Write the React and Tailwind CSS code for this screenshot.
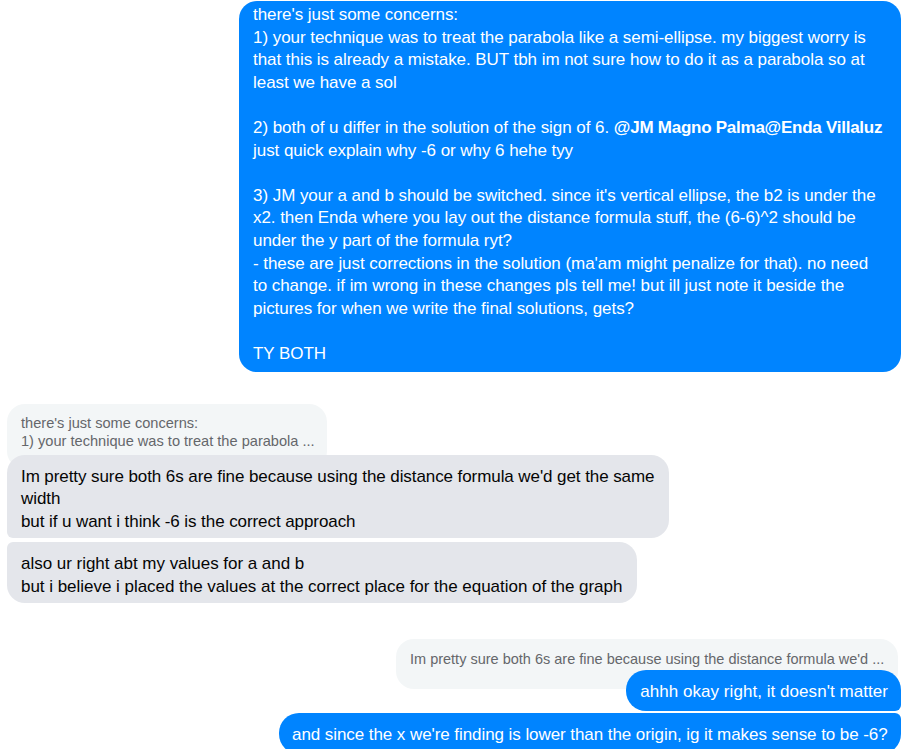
import React from "react";

const topLines = [
  "there's just some concerns:",
  "1) your technique was to treat the parabola like a semi-ellipse. my biggest worry is",
  "that this is already a mistake. BUT tbh im not sure how to do it as a parabola so at",
  "least we have a sol",
  "",
  "MENTION",
  "just quick explain why -6 or why 6 hehe tyy",
  "",
  "3) JM your a and b should be switched. since it's vertical ellipse, the b2 is under the",
  "x2. then Enda where you lay out the distance formula stuff, the (6-6)^2 should be",
  "under the y part of the formula ryt?",
  "- these are just corrections in the solution (ma'am might penalize for that). no need",
  "to change. if im wrong in these changes pls tell me! but ill just note it beside the",
  "pictures for when we write the final solutions, gets?",
  "",
  "TY BOTH",
];

function Line({ text }) {
  if (text === "") return <div className="h-[22.6px]">&nbsp;</div>;
  if (text === "MENTION")
    return (
      <div className="h-[22.6px] whitespace-nowrap">
        2) both of u differ in the solution of the sign of 6.{" "}
        <span className="font-bold tracking-[-0.25px]">@JM Magno Palma@Enda Villaluz</span>
      </div>
    );
  return <div className="h-[22.6px] whitespace-nowrap">{text}</div>;
}

export default function App() {
  return (
    <div className="h-[749px] w-[908px] overflow-hidden bg-white font-['Liberation_Sans',Arial,sans-serif] text-[17px] leading-[22.6px]">
      <div className="flex flex-col">
        {/* Top sent message */}
        <div className="ml-[239px] mt-[1px] w-[662px] rounded-[18px] bg-[#0084ff] pl-[14px] pr-[12px] pt-[3px] pb-[6px] tracking-[-0.05px] text-white">
          {topLines.map((t, i) => (
            <Line key={i} text={t} />
          ))}
        </div>

        {/* Reply quote 1 */}
        <div className="ml-[7px] mt-[32px] w-[320px] rounded-[18px] bg-[#f3f6f7] pl-[14px] pt-[10px] pb-[19px] text-[14.6px] leading-[18px] text-[#65676b]">
          <div className="whitespace-nowrap">there's just some concerns:</div>
          <div className="whitespace-nowrap">1) your technique was to treat the parabola ...</div>
        </div>

        {/* Received bubble A */}
        <div className="relative z-10 ml-[7px] -mt-[14px] w-[662px] rounded-[18px] rounded-bl-[6px] bg-[#e4e6eb] pl-[14px] pt-[11px] pb-[5px] tracking-[-0.08px] text-[#050505]">
          <div className="whitespace-nowrap">Im pretty sure both 6s are fine because using the distance formula we'd get the same</div>
          <div className="whitespace-nowrap">width</div>
          <div className="whitespace-nowrap">but if u want i think -6 is the correct approach</div>
        </div>

        {/* Received bubble B */}
        <div className="ml-[7px] mt-[4px] w-[630px] rounded-[18px] rounded-tl-[6px] bg-[#e4e6eb] pl-[14px] pt-[11px] pb-[5px] tracking-[-0.03px] text-[#050505]">
          <div className="whitespace-nowrap">also ur right abt my values for a and b</div>
          <div className="whitespace-nowrap">but i believe i placed the values at the correct place for the equation of the graph</div>
        </div>

        {/* Reply quote 2 */}
        <div className="ml-[396px] mt-[36px] w-[502px] rounded-[18px] bg-[#f3f6f7] pl-[14px] pt-[11px] pb-[21px] text-[14.5px] leading-[18px] text-[#65676b]">
          <div className="whitespace-nowrap">Im pretty sure both 6s are fine because using the distance formula we'd ...</div>
        </div>

        {/* Sent bubble ahhh */}
        <div className="relative z-10 mr-[7px] -mt-[19px] self-end rounded-[20px] rounded-br-[6px] bg-[#0084ff] pl-[14px] pr-[13px] pt-[11px] pb-[7px] tracking-[0.05px] text-white">
          <div className="whitespace-nowrap">ahhh okay right, it doesn't matter</div>
        </div>

        {/* Sent bubble 2 */}
        <div className="mr-[7px] mt-[2px] w-[622px] self-end rounded-[20px] rounded-tr-[6px] bg-[#0084ff] pl-[13px] pt-[11px] pb-[7px] tracking-[-0.07px] text-white">
          <div className="whitespace-nowrap">and since the x we're finding is lower than the origin, ig it makes sense to be -6?</div>
        </div>
      </div>
    </div>
  );
}
